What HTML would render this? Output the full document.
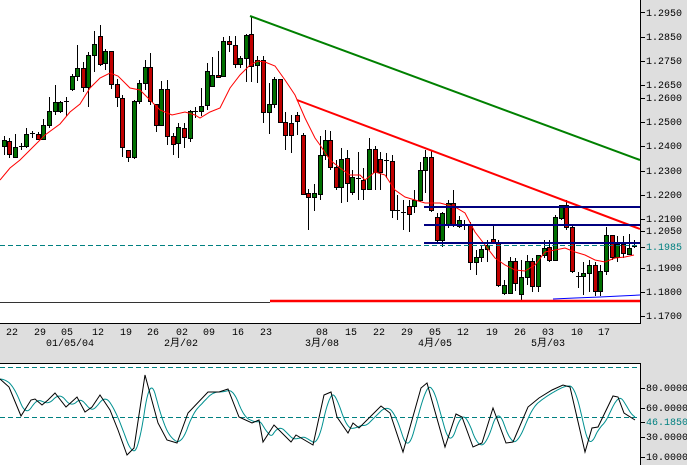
<!DOCTYPE html>
<html><head><meta charset="utf-8"><style>
html,body{margin:0;padding:0;}
body{width:687px;height:465px;overflow:hidden;background:#dedede;font-family:"Liberation Mono","Noto Sans CJK SC",monospace;}
svg{position:absolute;left:0;top:0;}
text{font-family:"Liberation Mono","Noto Sans CJK SC",monospace;font-size:10px;fill:#000;}
</style></head><body>
<svg id="s" width="687" height="465" xmlns="http://www.w3.org/2000/svg">
<rect x="0" y="0" width="687" height="465" fill="#dedede"/>
<rect x="0" y="0" width="640" height="323" fill="#fff"/>
<rect x="0" y="363" width="640" height="102" fill="#fff"/>
<line x1="640.5" y1="0" x2="640.5" y2="324" stroke="#000"/>
<line x1="0" y1="323.5" x2="641" y2="323.5" stroke="#000"/>
<line x1="640.5" y1="363" x2="640.5" y2="465" stroke="#000"/>
<line x1="0" y1="363.5" x2="641" y2="363.5" stroke="#000"/>
<g id="ticks"></g>
<g id="main"></g>
<!-- trend lines -->
<line x1="250" y1="16" x2="640" y2="160" stroke="#008000" stroke-width="2"/>
<line x1="297" y1="100" x2="640" y2="229" stroke="#ff0000" stroke-width="2"/>
<line x1="0" y1="302.5" x2="270" y2="302.5" stroke="#333" stroke-width="1"/>
<line x1="270" y1="301" x2="640" y2="301" stroke="#ff0000" stroke-width="2.5"/>
<polyline points="553,299 575,298 600,297 620,296 640,295" fill="none" stroke="#0000ff" stroke-width="1"/>
<line x1="424" y1="207" x2="640" y2="207" stroke="#000080" stroke-width="2"/>
<line x1="424" y1="225" x2="640" y2="225" stroke="#000080" stroke-width="2"/>
<line x1="424" y1="243" x2="640" y2="243" stroke="#000080" stroke-width="2"/>
<line x1="0" y1="245.5" x2="640" y2="245.5" stroke="#008080" stroke-dasharray="5,3"/>
<line x1="0" y1="367.5" x2="640" y2="367.5" stroke="#008080" stroke-dasharray="5,3"/>
<line x1="0" y1="417.5" x2="640" y2="417.5" stroke="#008080" stroke-dasharray="5,3"/>
<g id="osc"></g>
<!-- right axis labels -->
<text x="646" y="16">1.2950</text>
<text x="646" y="40">1.2850</text>
<text x="646" y="64">1.2750</text>
<text x="646" y="88">1.2650</text>
<text x="646" y="101">1.2600</text>
<text x="646" y="125">1.2500</text>
<text x="646" y="149">1.2400</text>
<text x="646" y="174">1.2300</text>
<text x="646" y="198">1.2200</text>
<text x="646" y="222">1.2100</text>
<text x="646" y="234">1.2050</text>
<text x="646" y="250" style="fill:#008080">1.1985</text>
<text x="646" y="271">1.1900</text>
<text x="646" y="295">1.1800</text>
<text x="646" y="319">1.1700</text>
<text x="646" y="391">80.0000</text>
<text x="646" y="411">60.0000</text>
<text x="646" y="425" style="fill:#008080">46.1850</text>
<text x="646" y="440">30.0000</text>
<text x="646" y="460">10.0000</text>
<g id="dates" text-anchor="middle">
<text x="12" y="335">22</text><text x="40" y="335">29</text><text x="67" y="335">05</text><text x="98" y="335">12</text><text x="126" y="335">19</text><text x="153" y="335">26</text><text x="182" y="335">02</text><text x="209" y="335">09</text><text x="238" y="335">16</text><text x="266" y="335">23</text><text x="322" y="335">08</text><text x="351" y="335">15</text><text x="379" y="335">22</text><text x="407" y="335">29</text><text x="435" y="335">05</text><text x="463" y="335">12</text><text x="492" y="335">19</text><text x="520" y="335">26</text><text x="548" y="335">03</text><text x="577" y="335">10</text><text x="604" y="335">17</text>
<text x="70" y="346">01/05/04</text><text x="181" y="346">2月/02</text><text x="322" y="346">3月/08</text><text x="435" y="346">4月/05</text><text x="548" y="346">5月/03</text>
</g>
</svg>
<script>
var NS="http://www.w3.org/2000/svg";
function el(p,t,a){var e=document.createElementNS(NS,t);for(var k in a)e.setAttribute(k,a[k]);p.appendChild(e);return e;}
var tk=document.getElementById('ticks');
[12,37,61,85,98,122,146,171,195,219,231,247,268,292,316,388,408,422,437,457].forEach(function(y){el(tk,'line',{x1:641,y1:y+.5,x2:645,y2:y+.5,stroke:'#000'});});
var C=[[4,140,146,136,155,'g'],[9,141,154,138,158,'r'],[15,147,157,134,158,'g'],[21,146,147,143,150,'d'],[26,134,146,128,148,'g'],[32,133,134,131,138,'d'],[38,134,139,132,140,'r'],[43,125,139,119,140,'g'],[49,111,125,97,128,'g'],[55,102,111,85,115,'g'],[60,102,111,101,113,'g'],[66,101,102,97,116,'d'],[72,76,89,74,91,'g'],[77,68,76,45,81,'g'],[83,68,87,62,92,'r'],[88,55,87,52,107,'g'],[94,44,55,31,72,'g'],[100,36,64,25,66,'r'],[105,51,63,49,70,'g'],[111,51,84,51,89,'r'],[117,84,97,79,107,'r'],[122,98,147,95,157,'r'],[128,150,157,150,162,'r'],[134,101,157,100,159,'g'],[139,83,101,80,104,'g'],[145,67,83,60,90,'g'],[150,67,101,53,105,'r'],[156,104,125,104,132,'r'],[161,89,125,81,125,'g'],[167,89,136,80,145,'r'],[173,136,144,133,155,'r'],[178,127,143,123,158,'g'],[184,128,137,123,148,'r'],[190,111,138,110,142,'g'],[195,111,112,107,118,'d'],[201,106,111,88,116,'g'],[207,71,105,63,110,'g'],[212,75,86,57,87,'g'],[218,75,77,51,77,'r'],[223,41,76,37,77,'g'],[229,41,44,36,52,'r'],[235,45,64,36,68,'r'],[240,58,64,56,68,'g'],[246,35,58,34,82,'g'],[251,34,66,17,82,'r'],[257,60,65,56,83,'g'],[263,60,112,56,123,'r'],[269,104,112,83,134,'g'],[274,79,104,77,108,'g'],[280,79,122,79,122,'r'],[285,122,135,112,150,'r'],[291,123,135,115,153,'r'],[297,115,121,112,135,'r'],[303,135,194,133,194,'r'],[308,193,197,189,230,'r'],[314,193,197,184,211,'g'],[320,155,194,136,200,'g'],[325,140,155,130,160,'g'],[330,140,167,131,170,'r'],[336,167,187,160,190,'r'],[341,159,187,148,203,'g'],[347,158,183,150,202,'r'],[352,177,192,170,195,'g'],[358,178,180,152,200,'d'],[363,180,189,168,200,'r'],[369,149,189,138,190,'g'],[375,149,172,146,190,'r'],[380,159,172,152,190,'r'],[386,160,161,153,178,'d'],[392,161,210,155,218,'r'],[397,210,211,195,220,'d'],[403,212,213,200,230,'d'],[409,206,214,200,232,'r'],[414,200,206,190,213,'g'],[420,170,200,162,202,'g'],[425,157,170,150,193,'g'],[431,157,210,150,212,'r'],[437,217,240,213,243,'r'],[442,213,240,212,247,'g'],[448,203,225,200,228,'g'],[453,203,224,190,227,'r'],[459,220,226,216,228,'g'],[464,225,226,220,230,'d'],[470,224,262,222,270,'r'],[476,257,262,250,275,'g'],[481,249,257,245,262,'g'],[487,245,249,240,262,'g'],[493,239,242,225,243,'r'],[498,242,285,240,287,'r'],[504,285,293,280,295,'g'],[510,261,293,257,294,'g'],[515,261,283,258,291,'r'],[521,277,294,260,300,'g'],[527,261,277,255,285,'g'],[532,261,286,258,292,'r'],[538,255,286,255,292,'g'],[544,248,255,240,258,'g'],[549,247,260,240,262,'r'],[555,217,260,215,260,'g'],[561,205,218,205,220,'g'],[566,205,227,200,230,'r'],[572,227,271,225,273,'r'],[578,276,277,272,288,'d'],[583,273,276,262,295,'g'],[589,265,273,260,292,'g'],[595,265,291,262,296,'r'],[600,271,291,265,296,'g'],[606,235,271,227,275,'g'],[612,235,257,235,260,'r'],[617,244,257,236,262,'g'],[623,244,253,236,258,'r'],[629,248,254,234,254,'g'],[634,246,247,240,248,'d']];
var m=document.getElementById('main');
C.forEach(function(c){var x=c[0];el(m,'line',{x1:x+.5,y1:c[3],x2:x+.5,y2:c[4],stroke:'#000'});
var h=Math.max(1,c[2]-c[1]);if(c[5]=='d'){el(m,'line',{x1:x-2,y1:c[1]+.5,x2:x+3,y2:c[1]+.5,stroke:'#000'});}
else el(m,'rect',{x:x-1.5,y:c[1]+.5,width:4,height:h,fill:c[5]=='g'?'#007000':'#c00000',stroke:'#000','stroke-width':1});});
var ma="0,180 10,168 20,160 30,150 45,135 60,124 70,112 80,104 90,88 100,78 110,73 118,76 130,88 140,90 150,100 160,110 172,115 185,112 195,115 200,118 210,112 220,108 230,88 240,75 250,65 258,61 265,62 275,66 285,80 295,95 305,118 315,138 320,145 330,160 340,168 350,175 360,175 365,180 375,172 385,175 395,190 405,197 415,200 425,203 440,203 455,207 465,213 475,232 485,245 495,258 505,265 515,270 525,271 535,265 545,252 555,250 565,248 575,252 585,255 595,260 605,262 615,258 625,257 634,255";
el(m,'polyline',{points:ma,fill:'none',stroke:'#ff0000','stroke-width':1});
var B=[[0,379],[9,387],[21,416],[31,400],[35,399],[42,405],[48,400],[55,393],[66,407],[77,397],[85,412],[92,407],[100,395],[110,410],[118,430],[127,455],[134,448],[145,375],[158,423],[167,440],[177,443],[188,413],[208,392],[219,392],[228,389],[239,417],[252,423],[259,420],[263,442],[274,425],[291,442],[296,435],[313,445],[324,395],[331,392],[337,417],[348,433],[353,423],[359,428],[370,417],[381,406],[390,413],[403,452],[421,388],[427,383],[445,447],[456,414],[462,417],[473,447],[482,443],[493,408],[506,443],[513,442],[528,407],[539,398],[552,390],[563,385],[570,387],[585,452],[592,428],[598,427],[613,396],[618,397],[624,413],[635,420]];
var o=document.getElementById('osc');
function val(x){if(x<=B[0][0])return B[0][1];for(var i=1;i<B.length;i++){if(x<=B[i][0]){var a=B[i-1],b=B[i];return a[1]+(b[1]-a[1])*(x-a[0])/(b[0]-a[0]);}}return B[B.length-1][1];}
var tp=[];for(var x=0;x<=635;x++){var s=0,n=0;for(var k=-10;k<=0;k++){s+=val(x+k);n++;}tp.push(x+','+(s/n).toFixed(1));}
el(o,'polyline',{points:tp.join(' '),fill:'none',stroke:'#009090','stroke-width':1});
el(o,'polyline',{points:B.map(function(p){return p.join(',');}).join(' '),fill:'none',stroke:'#000','stroke-width':1});
</script>
</body></html>
